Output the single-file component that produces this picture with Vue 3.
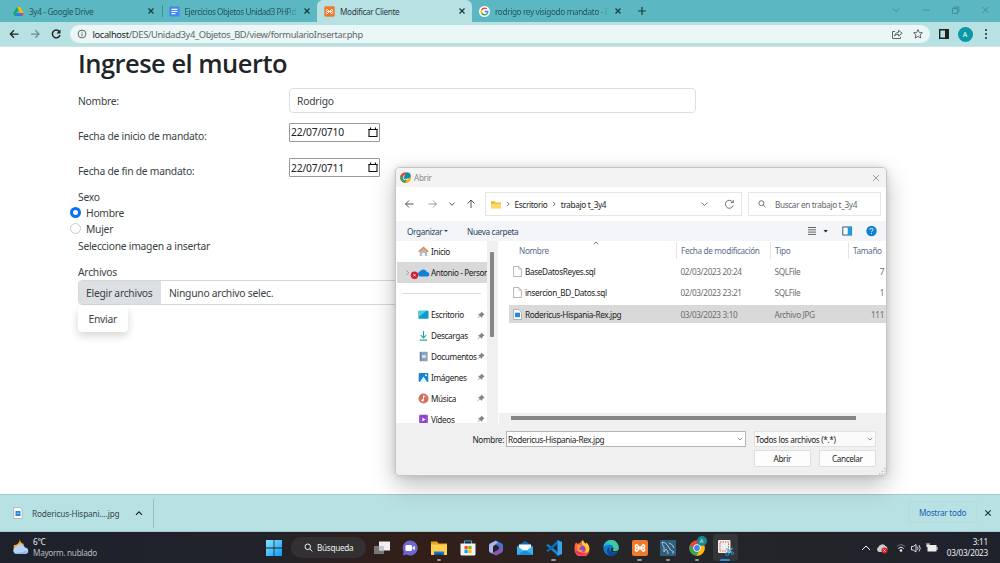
<script setup>
const side = [
  { name: 'Escritorio', icon: 'desk' },
  { name: 'Descargas', icon: 'down' },
  { name: 'Documentos', icon: 'doc' },
  { name: 'Imágenes', icon: 'img' },
  { name: 'Música', icon: 'mus' },
  { name: 'Vídeos', icon: 'vid' },
]
const files = [
  { name: 'BaseDatosReyes.sql', date: '02/03/2023 20:24', type: 'SQLFile', size: '7' },
  { name: 'insercion_BD_Datos.sql', date: '02/03/2023 23:21', type: 'SQLFile', size: '1' },
  { name: 'Rodericus-Hispania-Rex.jpg', date: '03/03/2023 3:10', type: 'Archivo JPG', size: '111', sel: true },
]
</script>

<template>
  <div class="screen">
    <header class="tabs">
      <div class="tab t1">
        <svg class="fav" viewBox="0 0 12 12"><path d="M4.2 1h3.6l4 7H8.2z" fill="#ffba00" /><path d="M4.2 1 .2 8 2 11l4-7z" fill="#11a861" /><path d="M3.8 8h8L10 11H2z" fill="#3777e3" /><path d="M8.2 8h3.6L10 11z" fill="#ea4335" /></svg>
        <span class="label">3y4 - Google Drive</span>
        <svg class="x" viewBox="0 0 8 8"><path d="M1.5 1.5l5 5m0-5l-5 5" /></svg>
      </div>
      <div class="tab t2">
        <svg class="fav" viewBox="0 0 12 12"><rect x=".5" y=".5" width="11" height="11" rx="1.5" fill="#4285f4" /><path d="M2.7 3.7h6.6M2.7 6h6.6M2.7 8.3h4.3" stroke="#fff" stroke-width="1.2" /></svg>
        <span class="label fade">Ejercicios Objetos Unidad3 PHP.d</span>
        <svg class="x" viewBox="0 0 8 8"><path d="M1.5 1.5l5 5m0-5l-5 5" /></svg>
      </div>
      <div class="tab t3">
        <svg class="fav" viewBox="0 0 12 12"><rect x=".3" y=".3" width="11.4" height="11.4" rx="1.5" fill="#ee7a2f" /><path d="M3.500 3.500l5 5M8.500 3.500l-5 5M3.500 3.500q-2 1.300 0 2.500h5q2-1.200 0-2.500M3.500 8.500q-2-1.300 0-2.500h5q2 1.200 0 2.500" fill="none" stroke="#fff" stroke-width="1" /></svg>
        <span class="label">Modificar Cliente</span>
        <svg class="x" viewBox="0 0 8 8"><path d="M1.5 1.5l5 5m0-5l-5 5" /></svg>
      </div>
      <div class="tab t4">
        <svg class="fav" viewBox="0 0 12 12"><circle cx="6" cy="6" r="6" fill="#fff" /><g fill="none" stroke-width="1.6"><path d="M8.5 3.3A3.6 3.6 0 0 0 2.9 4.2" stroke="#ea4335" /><path d="M2.9 4.2a3.6 3.6 0 0 0 0 3.6" stroke="#fbbc05" /><path d="M2.9 7.8a3.6 3.6 0 0 0 5.5 1" stroke="#34a853" /><path d="M8.4 8.8A3.6 3.6 0 0 0 9.6 6H6.2" stroke="#4285f4" /></g></svg>
        <span class="label fade">rodrigo rey visigodo mandato - B</span>
        <svg class="x" viewBox="0 0 8 8"><path d="M1.5 1.5l5 5m0-5l-5 5" /></svg>
      </div>
      <svg class="plus" viewBox="0 0 8 8"><path d="M4 0v8M0 4h8" /></svg>
      <svg class="win" viewBox="0 0 100 12"><path d="M3 4.5l3.2 3.2 3.2-3.2M32.700 6h7M62.500 4.500h5v5h-5zM64 4.500V3h5v5h-1.500M92.500 3l6 6m0-6l-6 6" /></svg>
    </header>

    <div class="toolbar">
      <svg class="navi" viewBox="0 0 70 24"><g fill="none" stroke-width="1.250"><path stroke="#222" d="M18.500 12h-8m3.500-3.700L10.300 12l3.700 3.700" /><path stroke="#668f93" d="M31 12h8m-3.700-3.700L39 12l-3.700 3.700" /><path stroke="#222" stroke-width="1.400" d="M59.300 9.500A3.900 3.900 0 1 0 60 13" /></g><path fill="#222" d="M60.500 7.500v4h-4z" /></svg>
      <div class="url">
        <svg class="info" viewBox="0 0 10 10"><circle cx="5" cy="5" r="3.900" /><path d="M5 4.400v2.800M5 2.700v1" /></svg>
        <span class="addr"><b>localhost</b>/DES/Unidad3y4_Objetos_BD/view/formularioInsertar.php</span>
        <svg class="share" viewBox="0 0 12 12"><path d="M4 3.500H1.500v7h8V8.800M3.500 8q.5-3.500 4-3.700V2.300L11.200 5.300 7.500 8V6.300Q5 6.200 3.500 8z" /></svg>
        <svg class="star" viewBox="0 0 12 12"><path d="M6 1.600l1.300 2.900 3.100.3-2.300 2.100.7 3.100L6 8.400 3.200 10l.7-3.100-2.300-2.100 3.100-.3z" /></svg>
      </div>
      <svg class="panel" viewBox="0 0 10 10"><path d="M0 0h10v10H0z M1.400 1.400v7.200h4.600V1.400z" fill-rule="evenodd" /></svg>
      <span class="avatar">A</span>
      <svg class="dots" viewBox="0 0 4 12"><circle cx="2" cy="2" r="1" /><circle cx="2" cy="6" r="1" /><circle cx="2" cy="10" r="1" /></svg>
    </div>

    <main class="page">
      <h1>Ingrese el muerto</h1>
      <div class="field f1"><label>Nombre:</label><div class="control">Rodrigo</div></div>
      <div class="field f2"><label>Fecha de inicio de mandato:</label><div class="date">22/07/0710<svg viewBox="0 0 10 11"><path d="M1 2.500h8v7H1z" /><path d="M.5 2.500h9M2.500.5v2M7.500.5v2" stroke-width="1.500" /></svg></div></div>
      <div class="field f3"><label>Fecha de fin de mandato:</label><div class="date">22/07/0711<svg viewBox="0 0 10 11"><path d="M1 2.500h8v7H1z" /><path d="M.5 2.500h9M2.500.5v2M7.500.5v2" stroke-width="1.500" /></svg></div></div>
      <p class="sexo">Sexo</p>
      <div class="radio"><i class="on"></i>Hombre</div>
      <div class="radio"><i></i>Mujer</div>
      <p class="selec">Seleccione imagen a insertar</p>
      <p class="arch">Archivos</p>
      <div class="file"><span class="choose">Elegir archivos</span><span class="none">Ninguno archivo selec.</span></div>
      <button class="send">Enviar</button>
    </main>

    <div class="downloads">
      <svg class="dfile" viewBox="0 0 10 12"><path d="M.8.500h6L9.200 3v8.500H.8z" fill="#fff" stroke="#999" stroke-width=".6" /><rect x="2.500" y="4" width="5" height="5" fill="#2785dc" /><path d="M3.500 6.800l1.500-1.600 1.500 1.600z" fill="#a8dcff" /></svg>
      <span class="dname">Rodericus-Hispani....jpg</span>
      <svg class="chev" viewBox="0 0 8 6"><path d="M1 4.800l3-3 3 3" /></svg>
      <i class="sep"></i>
      <span class="show">Mostrar todo</span>
      <svg class="dx" viewBox="0 0 8 8"><path d="M1.300 1.300l5.400 5.400m0-5.400l-5.400 5.400" /></svg>
    </div>

    <footer class="task">
      <svg class="weather" viewBox="0 0 18 18"><path d="M8 1q-.2 4 4 5l-3 5-7-1Q1 8 2 7q5 0 6-6z" fill="#f5a623" /><path d="M4.500 16a3.800 3.800 0 0 1 0-7.500 4.700 4.700 0 0 1 8.500 1 3.300 3.300 0 0 1 .7 6.500z" fill="#b8d2fa" /><path d="M2 14.500q7 1 13-2-.2 3-2.500 3.500h-8q-1.500 0-2.500-1.500z" fill="#8eb3ed" /></svg>
      <div class="wtext">6°C<br><span>Mayorm. nublado</span></div>
      <svg class="start" viewBox="0 0 16 16"><defs><linearGradient id="wg" x2="1" y2="1"><stop stop-color="#8be3ff" /><stop offset="1" stop-color="#0a9af5" /></linearGradient></defs><path fill="url(#wg)" d="M0 0h7.600v7.600H0zM8.400 0H16v7.600H8.400zM0 8.400h7.600V16H0zM8.400 8.400H16V16H8.400z" /></svg>
      <div class="search"><svg viewBox="0 0 10 10"><circle cx="4.200" cy="4.200" r="3.100" /><path d="M6.500 6.500L9.300 9.300" /></svg>Búsqueda</div>
      <div class="apps">
        <div><svg viewBox="0 0 16 16"><path d="M0 6h10v8H0z" fill="#777" /><path d="M5 1.500h11v9H5z" fill="#eee" /><path d="M5 6h5v4.500H5z" fill="#c5c5c5" /></svg></div>
        <div><svg viewBox="0 0 16 16"><path d="M8 .5a7.500 7.500 0 1 1-3.500 14L1 15.500l.700-3.700A7.500 7.500 0 0 1 8 .5z" fill="#6e66cc" /><rect x="3.500" y="5" width="6.500" height="6" rx="1.200" fill="#fff" /><path d="M10.500 7.500l2.300-1.700v4.500l-2.300-1.700z" fill="#fff" /></svg></div>
        <div class="run"><svg viewBox="0 0 16 16"><path d="M0 1.500h6l1.500 2H16V15H0z" fill="#e9a518" /><path d="M0 4.500h16V15H0z" fill="#ffd04f" /><path d="M3 15v-3.500h10V15z" fill="#1679c9" /><path d="M4.500 15v-1.500h7V15z" fill="#0b4f94" /></svg></div>
        <div><svg viewBox="0 0 16 16"><path d="M4.500 4V1h7v3" fill="none" stroke="#2ea8df" stroke-width="1.200" /><path d="M.5 3.500h15V14q0 1.500-1.500 1.500H2Q.5 15.500.5 14z" fill="#f3f3f3" /><path d="M4.500 6H7.700v3.200H4.500z" fill="#f25022" /><path d="M8.300 6h3.200v3.200H8.300z" fill="#7fba00" /><path d="M4.500 9.800h3.200V13H4.500z" fill="#00a4ef" /><path d="M8.300 9.800h3.200V13H8.300z" fill="#ffb900" /></svg></div>
        <div><svg viewBox="0 0 16 16"><path d="M8 .5L2 3.500Q1 4 1 5.500v5Q1 12 2.300 12.700L5 14V7q0-1 1-1.500L10.500 3z" fill="#a8b5ee" /><path d="M8 .5l6 3q1 .5 1 2v4L11 7 9.500 5.500 7 4.500l3-1.700z" fill="#3f77d2" /><path d="M15 9v1.500q0 1.500-1.300 2.200L8 15.500l-5.500-2.700Q5 13 7 11.500l3.500-2L11 7z" fill="#8759be" /></svg></div>
        <div><svg viewBox="0 0 16 16"><path d="M0 6l8-5 8 5v9H0z" fill="#1268ad" /><path d="M2 4.500h12V11H2z" fill="#fff" /><path d="M0 6l8 5.500L16 6v9H0z" fill="#36b5ee" /><path d="M0 15l8-5 8 5z" fill="#1b8ed8" /></svg></div>
        <div class="run"><svg viewBox="0 0 16 16"><path d="M.5 4.700L2 4l10 8v4L.5 5.500z" fill="#1484d2" /><path d="M.5 11.300L2 12 12 4V0L.5 10.500z" fill="#0a6ab4" /><path d="M11.500 0L16 2v12l-4.500 2z" fill="#35a3ee" /></svg></div>
        <div><svg viewBox="0 0 16 16"><path d="M2 2l1.500 2Q5 3 6 3q1-2 3-3 0 2.500 3 4l.5-1.500Q16 6 15.500 10a7.500 7.500 0 0 1-15-1Q.3 5 2 2z" fill="#ff6332" /><path d="M9 0q0 2.500 3 4l.5-1.500Q16 6 15 10q-1 3-4 3Q14 7 8 5 7 2 9 0z" fill="#ffcc35" /><path d="M1 10q1 5 7 5.700Q13 15 14.500 12 10 15 6 12z" fill="#e7317b" /><circle cx="7.800" cy="8.800" r="3.200" fill="#8a49d9" /><path d="M3 5q3-.7 4.500 1.500L5 8q1 2.700 4.500 2.500Q6 14 3.500 10.500z" fill="#ff9838" /></svg></div>
        <div><svg viewBox="0 0 16 16"><circle cx="8" cy="8" r="7.700" fill="#127ac8" /><path d="M.3 7A7.700 7.700 0 0 1 15.700 8q-.5 3.500-4.200 3.300-2.500-.5-1-2.500Q10 4.500 5.500 4.800 2 5 .3 7z" fill="#2fb5dc" /><path d="M8 .3A7.700 7.700 0 0 1 15.700 8q-.5 3.500-4.200 3.300-2.500-.5-1-2.500Q11 4 3 2.500 5 .5 8 .3z" fill="#4ad083" opacity=".7" /><path d="M6.500 7q-1.500 6 7.500 6-6 5.500-9.500.5Q2.500 9 6.500 7z" fill="#0b4b91" /><path d="M10.500 8.800q-1.500 2 1 2.500 2.500.3 4-1L14.300 12.500Q7 13 8 9q.7-1.500 2-1.500z" fill="#25272d" /></svg></div>
        <div class="run"><svg viewBox="0 0 16 16"><rect width="16" height="16" rx="2" fill="#f1792c" /><path d="M4.500 4.500l7 7m0-7l-7 7M4.500 4.500q-2.500 1.700 0 3.500h7q2.500-1.800 0-3.500M4.500 11.500q-2.500-1.700 0-3.500h7q2.500 1.800 0 3.500" fill="none" stroke="#fff" stroke-width="1.500" /></svg></div>
        <div class="run"><svg viewBox="0 0 16 16"><rect width="16" height="16" rx="1" fill="#2e5f7e" /><path d="M2 2q4 0 6 4 2 5 6 6l-2 1.500M2 2q0 3 2 5v5l2-3q2 1 2 5M9 3q4 1 5 5" fill="none" stroke="#b9cfda" stroke-width=".9" /></svg></div>
        <div class="run"><svg class="chrome" viewBox="0 0 16 16"><circle cx="8" cy="8" r="7.700" fill="#ea4335" /><path d="M1.300 4.200A7.700 7.700 0 0 0 7.500 15.700L11 9.700 4.700 9.700z" fill="#34a853" /><path d="M8 4.500h6.900A7.700 7.700 0 0 1 7.500 15.700L11 9.800z" fill="#fbbc05" /><circle cx="8" cy="8" r="3.700" fill="#fff" /><circle cx="8" cy="8" r="2.900" fill="#4285f4" /></svg><span class="badge">A</span></div>
        <div class="run active"><svg viewBox="0 0 16 16"><rect x="0" y="0" width="12.500" height="13" rx="1" fill="#eee" /><rect x="2" y="2" width="8.500" height="9" fill="none" stroke="#d65b4a" stroke-dasharray="1.500 1" /><path d="M8 8.500l6 4M14.500 8L10 12.500" stroke="#4fb3e7" stroke-width="1.200" /><circle cx="9.300" cy="14" r="1.500" fill="none" stroke="#2698da" /><circle cx="14.200" cy="13.200" r="1.300" fill="none" stroke="#2698da" /></svg></div>
      </div>
      <svg class="tray" viewBox="0 0 80 16"><g fill="none" stroke="#eee"><path d="M2 10l4-4 4 4" /><path d="M37 6.500a5.500 5.500 0 0 1 8 0" stroke="#777" /><path d="M38.300 8.500a3.800 3.800 0 0 1 5.400 0" /><path d="M51.500 6.500v3.500h1.800L56 12V4.500L53.300 6.500zM57.500 6.700q1 1.700 0 3.200M59 5.200q2.500 3.300 0 6.200" stroke-width=".9" /></g><circle cx="41" cy="10.500" r="1.300" fill="#eee" /><path d="M19 12a2.700 2.700 0 0 1-.5-5 4 4 0 0 1 7-1q2 .5 2 3L25 12z" fill="#ccc" /><circle cx="24.500" cy="10.500" r="3" fill="#d8202c" /><path d="M23.400 9.400l2.200 2.200m0-2.200l-2.200 2.200" stroke="#fff" stroke-width=".7" /><path d="M67.500 5h9v6.500h-9z" fill="#eee" /><path d="M76.500 7h1v3h-1zM66.500 3h1v1.500h1V3h1v4h-3z" fill="#eee" /></svg>
      <div class="clock">3:11<br>03/03/2023</div>
    </footer>

    <section class="dialog">
      <div class="dtitle">
        <svg class="clogo" viewBox="0 0 16 16"><circle cx="8" cy="8" r="7.700" fill="#ea4335" /><path d="M1.300 4.200A7.700 7.700 0 0 0 7.500 15.700L11 9.700 4.700 9.700z" fill="#34a853" /><path d="M8 4.500h6.900A7.700 7.700 0 0 1 7.500 15.700L11 9.800z" fill="#fbbc05" /><circle cx="8" cy="8" r="3.700" fill="#fff" /><circle cx="8" cy="8" r="2.900" fill="#4285f4" /><circle cx="11.200" cy="5" r="4.200" fill="#0d8fa6" /></svg>
        <span>Abrir</span>
        <svg class="close" viewBox="0 0 8 8"><path d="M1 1l6 6m0-6L1 7" /></svg>
      </div>
      <div class="dnav">
        <svg class="arrows" viewBox="0 0 76 14"><g fill="none" stroke="#555"><path d="M9.500 7H1.500M5 3.500L1.500 7 5 10.500" /><path stroke="#999" d="M24.500 7h8M29 3.500L32.500 7 29 10.500" /><path d="M45.500 5.700l2.500 2.600 2.500-2.600M67 11V3M63.500 6.500L67 3l3.500 3.500" /></g></svg>
        <div class="path">
          <svg class="fold" viewBox="0 0 12 10"><path d="M0 1h4l1.200 1.500H12V9.500H0z" fill="#f0b430" /><path d="M0 4h12v5.500H0z" fill="#ffd767" /></svg>
          <svg class="gt" viewBox="0 0 4 6"><path d="M1 .8L3.200 3 1 5.200" /></svg>
          <span class="p1">Escritorio</span>
          <svg class="gt" viewBox="0 0 4 6"><path d="M1 .8L3.200 3 1 5.200" /></svg>
          <span class="p2">trabajo t_3y4</span>
          <svg class="pend" viewBox="0 0 40 14"><path d="M3.500 5.700L6.500 8.500l3-2.800M34.800 5.200A4 4 0 1 0 35.200 8.500M35.300 3v2.600h-2.600" /></svg>
        </div>
        <div class="find"><svg viewBox="0 0 8 8"><circle cx="3.400" cy="3.200" r="2.500" /><path d="M5.200 5L7.400 7.200" /></svg>Buscar en trabajo t_3y4</div>
      </div>
      <div class="dcmd">
        <span class="org">Organizar</span><i class="tri"></i><span class="nueva">Nueva carpeta</span>
        <svg class="cicons" viewBox="0 0 72 12"><path d="M1 2.500h8M1 4.800h8M1 7.100h8M1 9.400h8" stroke="#555" stroke-width=".9" /><path d="M16.500 5h4.400l-2.200 2.500z" fill="#223" /><rect x="35.800" y="2" width="8.800" height="8" fill="#fff" stroke="#234b70" stroke-width=".9" /><path d="M40.700 2h4v8h-4z" fill="#1b9be8" /><circle cx="64.500" cy="6" r="5.200" fill="#0f7fd3" /><path d="M62.900 4.900q0-1.600 1.600-1.600t1.600 1.400q0 .8-1 1.400-.6.400-.6 1M64.500 8v1" fill="none" stroke="#fff" stroke-width=".9" /></svg>
      </div>
      <div class="dbody">
        <nav class="side">
          <div class="srow"><svg class="sico" viewBox="0 0 12 12"><path d="M2 5.500L6 2l4 3.500V11H7.500V7.500h-3V11H2z" fill="#b5bac0" /><path d="M.8 6.300L6 1.500l5.200 4.800" fill="none" stroke="#ed7d31" stroke-width="1.400" /></svg><span>Inicio</span></div>
          <div class="srow cur"><svg class="cloud" viewBox="0 0 26 12"><path d="M2.500 3.500L4.700 5.700 2.500 8" fill="none" stroke="#888" stroke-width=".8" /><path d="M16 9.500a2.700 2.700 0 0 1 0-5.200 4 4 0 0 1 7 .7 2.300 2.300 0 0 1 .7 4.500z" fill="#1081d8" /><circle cx="10.500" cy="8.200" r="3.700" fill="#d51c2c" /><path d="M9.200 6.900l2.600 2.600m0-2.600l-2.600 2.600" stroke="#fff" stroke-width=".8" /></svg><span>Antonio - Person</span></div>
          <div class="srow div"><i></i></div>
          <div v-for="s in side" :key="s.name" class="srow">
            <svg v-if="s.icon === 'desk'" class="sico" viewBox="0 0 12 12"><rect x=".5" y="2" width="11" height="8.500" rx=".8" fill="#129bc8" /><path d="M.5 2.800Q.5 2 1.300 2H9L.5 9z" fill="#4ed0dc" /></svg>
            <svg v-else-if="s.icon === 'down'" class="sico" viewBox="0 0 12 12"><path d="M6 1v7.500M3 5.700l3 3 3-3M2 11h8" fill="none" stroke="#2ba88c" stroke-width="1.200" /></svg>
            <svg v-else-if="s.icon === 'doc'" class="sico" viewBox="0 0 12 12"><rect x="2" y=".8" width="8.500" height="10.500" rx=".8" fill="#8aa2c0" /><path d="M4.500 4.500h4v3h-4z" fill="#dbe5f0" /><path d="M2 1h1.500v10H2z" fill="#6480a5" /></svg>
            <svg v-else-if="s.icon === 'img'" class="sico" viewBox="0 0 12 12"><rect x=".8" y="1.200" width="10.400" height="9.600" rx=".8" fill="#1683d5" /><path d="M2 10.800L6 5l4 5.800z" fill="#e2f4ff" /><circle cx="8.700" cy="3.500" r="1" fill="#fff" /></svg>
            <svg v-else-if="s.icon === 'mus'" class="sico" viewBox="0 0 12 12"><circle cx="6" cy="6" r="5.500" fill="#d9705f" /><path d="M6 8V3l2 1" fill="none" stroke="#fff" stroke-width="1" /><circle cx="5" cy="8" r="1.300" fill="#fff" /></svg>
            <svg v-else class="sico" viewBox="0 0 12 12"><rect x="1.200" y=".8" width="9.600" height="10.400" rx=".8" fill="#8e3fd2" /><path d="M4.700 3.700v4.600L8.300 6z" fill="#fff" /><path d="M2.300 1v10M9.700 1v10" stroke="#c99bee" stroke-width=".9" stroke-dasharray="1 1" /></svg>
            <span>{{ s.name }}</span>
            <svg class="pin" viewBox="0 0 8 8"><path d="M4.500.500L7.500 3.500 6.500 4 5.200 5.500 5 7 3 5.300.8 7.200.5 7 2.600 4.700 1 3l1.700-.2L4.200 1.500z" fill="#7a8793" /></svg>
          </div>
        </nav>
        <div class="gutter"><i></i></div>
        <div class="list">
          <div class="lrow lhead"><span class="c1">Nombre</span><span class="c2">Fecha de modificación</span><span class="c3">Tipo</span><span class="c4">Tamaño</span><svg class="sort" viewBox="0 0 6 4"><path d="M.7 3.200L3 1l2.300 2.200" /></svg></div>
          <div v-for="f in files" :key="f.name" class="lrow" :class="{ sel: f.sel }">
            <span class="c1"><svg class="fico" viewBox="0 0 9 11"><path d="M.6.500h5.200l2.600 2.600v7.400H.6z" fill="#fff" stroke="#999" stroke-width=".7" /><path v-if="!f.sel" d="M5.800.500v2.600h2.600" fill="none" stroke="#999" stroke-width=".6" /><rect v-if="f.sel" x="2" y="3.700" width="5" height="4.500" fill="#2785dc" /></svg>{{ f.name }}</span>
            <span class="c2">{{ f.date }}</span><span class="c3">{{ f.type }}</span><span class="c4">{{ f.size }}</span>
          </div>
          <div class="hbar"><i></i></div>
        </div>
      </div>
      <div class="dfoot">
        <div class="l1"><span class="nl">Nombre:</span><div class="combo">Rodericus-Hispania-Rex.jpg<svg viewBox="0 0 6 4"><path d="M.7.800L3 3 5.300.800" /></svg></div><div class="filter">Todos los archivos (*.*)<svg viewBox="0 0 6 4"><path d="M.7.800L3 3 5.300.800" /></svg></div></div>
        <div class="l2"><button>Abrir</button><button>Cancelar</button></div>
        <svg class="grip" viewBox="0 0 8 8"><path d="M6 0h1.500v1.500H6zM6 3h1.500v1.500H6zM3 3h1.500v1.500H3zM6 6h1.500v1.500H6zM3 6h1.500v1.500H3zM0 6h1.500v1.500H0z" fill="#bbb" /></svg>
      </div>
    </section>
  </div>
</template>

<style>
html, body { margin: 0; overflow: hidden; }
</style>

<style scoped>
* { box-sizing: border-box; }
svg { flex: none; display: block; }
.screen { position: relative; width: 1000px; height: 563px; overflow: hidden; display: flex; flex-direction: column; background: #fff; font-family: "Noto Sans", "Open Sans", sans-serif; font-size: 8.200px; letter-spacing: -.34px; color: #222; white-space: nowrap; }
button { font: inherit; padding: 0; color: inherit; letter-spacing: inherit; }

.tabs { height: 22px; flex: none; background: #5bb7c1; display: flex; align-items: center; position: relative; }
.tab { height: 22px; display: flex; align-items: center; color: #25575d; letter-spacing: -.46px; }
.t1 { width: 161.500px; padding: 0 7px 0 13px; border-right: 0; position: relative; letter-spacing: -.34px; }
.t1::after { content: ""; width: 1px; height: 12px; background: #3f8f98; margin-left: 7px; margin-right: -8px; }
.t2 { width: 155.500px; padding: 0 6px 0 7px; }
.t3 { width: 155px; padding: 0 6px 0 7px; background: #b8e1e4; border-radius: 6px 6px 0 0; color: #2c3e40; letter-spacing: -.34px; }
.t4 { width: 156px; padding: 0 6px 0 7px; letter-spacing: -.36px; }
.fav { width: 11px; height: 11px; margin-right: 5px; }
.label { flex: 1; overflow: hidden; }
.fade { -webkit-mask-image: linear-gradient(90deg, #000 90%, transparent); mask-image: linear-gradient(90deg, #000 90%, transparent); }
.x { width: 8px; height: 8px; margin-left: 5px; }
.x path, .dx path { stroke: #1c3a3d; stroke-width: 1.200; }
.plus { width: 8px; height: 8px; margin-left: 10px; }
.plus path { stroke: #1c3a3d; stroke-width: 1.200; }
.win { width: 100px; height: 12px; margin-left: auto; margin-right: 10.500px; position: relative; top: -1px; }
.win path { fill: none; stroke: #3d8c95; stroke-width: .9; }

.toolbar { height: 25px; flex: none; background: #b8e1e4; display: flex; align-items: center; border-bottom: 1px solid #d3e3e4; }
.navi { width: 70px; height: 24px; }
.url { width: 860px; height: 18px; border-radius: 9px; background: #ebf7f7; display: flex; align-items: center; padding: 0 6px 0 7px; }
.info { width: 10px; height: 10px; margin-right: 5.500px; }
.info circle, .info path { fill: none; stroke: #555; stroke-width: .9; }
.addr { font-size: 9.300px; color: #5d6668; flex: 1; }
.addr b { font-weight: 400; color: #222; }
.share, .star { width: 12px; height: 12px; margin-left: 9px; }
.share path, .star path { fill: none; stroke: #555; stroke-width: .9; }
.panel { width: 10px; height: 10px; margin-left: 9px; fill: #222; }
.avatar { width: 15px; height: 15px; border-radius: 50%; background: #0b99a6; color: #fff; font-size: 7px; display: grid; place-items: center; margin-left: 8.500px; letter-spacing: 0; }
.dots { width: 4px; height: 12px; margin-left: 11.500px; fill: #222; }

.page { flex: 1; min-height: 0; padding-left: 78px; color: #3a3f44; font-size: 10.300px; letter-spacing: -.25px; }
h1 { margin: 0; height: 41px; font-family: "Open Sans", "Noto Sans", sans-serif; font-size: 25.500px; line-height: 33px; font-weight: 600; color: #212529; letter-spacing: -.52px; }
.field { display: flex; }
.field label { width: 211px; }
.f1 { height: 35px; }
.f1 label { line-height: 26px; }
.control { width: 406.500px; height: 25px; border: 1px solid #dcdfe2; border-radius: 4px; padding-left: 7px; line-height: 24px; }
.f2, .f3 { height: 35.300px; }
.f2 label, .f3 label { line-height: 27px; }
.date { width: 91px; height: 18.500px; border: 1px solid #999; border-radius: 1px; padding: 0 1px 0 1px; display: flex; align-items: center; justify-content: space-between; color: #222; letter-spacing: -.18px; }
.date svg { width: 10px; height: 11px; }
.date path { fill: none; stroke: #111; stroke-width: 1.100; }
p { margin: 0; }
.sexo { line-height: 16px; margin-top: -5px; }
.radio { display: flex; align-items: center; height: 16.500px; margin-left: -8px; }
.radio i { width: 11px; height: 11px; border: 1px solid #ccc; border-radius: 50%; margin-right: 5px; position: relative; top: -.5px; }
.radio i.on { border: 3px solid #0d6efd; }
.selec { line-height: 17px; margin-top: .5px; }
.arch { line-height: 16px; margin-top: 9px; }
.file { width: 617px; height: 25px; border: 1px solid #d3d8dc; border-radius: 4px; display: flex; line-height: 24px; margin-top: -.5px; }
.choose { width: 82px; background: #dde0e3; padding-left: 7px; }
.none { padding-left: 8px; }
.send { display: block; width: 49.500px; height: 26px; margin-top: 1px; border: 0; border-radius: 4px; background: #fff; box-shadow: 0 4px 9px rgba(0, 0, 0, .16); }

.downloads { height: 38px; flex: none; background: #b8e1e4; border-top: 1px solid #a9c8ca; display: flex; align-items: center; padding-left: 13px; color: #33484a; font-size: 8.200px; border-bottom: 1px solid #9fc9cc; letter-spacing: -.13px; }
.dfile { width: 10px; height: 12px; margin-right: 9px; }
.dname { width: 102px; }
.chev { width: 8px; height: 6px; margin-left: 1px; }
.chev path { fill: none; stroke: #222; stroke-width: 1.200; }
.sep { width: 1px; height: 29px; background: #94bfc2; margin-left: 10px; }
.show { margin-left: auto; width: 69px; height: 22px; border: 1px solid #b4dade; border-radius: 2px; display: grid; place-items: center; color: #1b5fb4; position: relative; top: -1px; letter-spacing: -.27px; }
.dx { width: 8px; height: 8px; margin-left: 7px; margin-right: 8px; }

.task { height: 31px; flex: none; display: flex; align-items: center; background: linear-gradient(90deg, #1c212b 0, #22232a 27%, #2d201e 35%, #331e18 42%, #2c211f 52%, #25262a 64%, #222429 80%, #1e222b 100%); color: #eee; padding-left: 12px; letter-spacing: -.3px; }
.weather { width: 18px; height: 18px; position: relative; top: -1px; }
.wtext { margin-left: 3px; width: 233px; line-height: 10.500px; }
.wtext span { color: #bbb; }
.start { width: 16px; height: 16px; }
.search { width: 75px; height: 21px; border-radius: 11px; background: #333033; margin-left: 9px; display: flex; align-items: center; padding-left: 13px; }
.search svg { width: 9px; height: 9px; margin-right: 4px; }
.search svg * { fill: none; stroke: #eee; stroke-width: 1.100; }
.apps { display: flex; margin-left: 1.500px; }
.apps div { width: 28.650px; height: 31px; display: grid; place-items: center; position: relative; }
.apps svg { width: 16px; height: 16px; }
.run::after { content: ""; position: absolute; bottom: 2.500px; left: 12px; width: 4.500px; height: 2px; border-radius: 1px; background: #999; }
.apps .active::before { content: ""; position: absolute; inset: 2px 1.500px; border-radius: 3px; background: #343539; }
.active svg { position: relative; }
.active::after { left: 9px; width: 10px; background: #1e90f0; bottom: 2.500px; }
.badge { position: absolute; left: 14px; top: 4px; width: 10px; height: 10px; border-radius: 50%; background: #168a92; font-size: 5.500px; display: grid; place-items: center; letter-spacing: 0; }
.tray { width: 80px; height: 16px; margin-left: auto; }
.clock { width: 46px; margin-left: 2px; margin-right: 12px; text-align: right; line-height: 10.500px; letter-spacing: -.23px; }

.dialog { position: absolute; left: 395px; top: 167px; width: 492px; height: 309px; border: 1px solid #c4c4c4; border-radius: 5px; background: #fff; overflow: hidden; box-shadow: 0 9px 24px rgba(0, 0, 0, .26), 0 0 6px rgba(0, 0, 0, .12); display: flex; flex-direction: column; }
.dtitle { height: 19px; flex: none; background: #f3f3f3; display: flex; align-items: center; padding: 0 6.500px 0 4px; color: #888; }
.clogo { width: 11px; height: 11px; margin-right: 3px; }
.close { width: 8px; height: 8px; margin-left: auto; }
.close path { stroke: #888; stroke-width: .8; }
.dnav { height: 34px; flex: none; display: flex; align-items: center; }
.arrows { width: 76px; height: 14px; margin-left: 8px; margin-right: 5px; }
.path { width: 257px; height: 24px; border: 1px solid #e6e6e6; display: flex; align-items: center; padding-left: 5px; }
.fold { width: 10px; height: 9px; }
.gt { width: 4px; height: 6px; margin: 0 4.500px 0 5px; }
.gt path, .pend path, .find svg *, .sort path { fill: none; stroke: #666; stroke-width: .9; }
.pend { width: 40px; height: 14px; margin-left: auto; margin-right: 3px; }
.find { width: 133px; height: 24px; margin-left: 6px; border: 1px solid #e6e6e6; display: flex; align-items: center; color: #666; padding-left: 9px; }
.find svg { width: 8px; height: 8px; margin-right: 9px; }
.dcmd { height: 20px; flex: none; background: #f4f5f8; display: flex; align-items: center; color: #294462; padding-left: 11px; }
.org { width: 34.500px; }
.tri { border: 2px solid transparent; border-top: 2.500px solid #294462; border-bottom: 0; margin-left: 2px; }
.nueva { margin-left: 19.500px; }
.cicons { width: 72px; height: 12px; margin-left: auto; margin-right: 7px; }
.dbody { height: 182px; flex: none; display: flex; }
.side { width: 91px; overflow: hidden; padding-top: .5px; }
.srow { height: 20.900px; display: flex; align-items: center; padding-left: 22px; overflow: hidden; }
.srow span { flex: 1; }
.sico { width: 11px; height: 11px; margin-right: 2px; }
.srow.cur { background: #d9d9d9; padding-left: 7px; margin-left: 1px; letter-spacing: -.4px; }
.cloud { width: 26px; height: 12px; margin-right: 1px; }
.srow.div { padding-left: 6px; }
.div i { width: 79px; height: 1px; background: #ddd; }
.pin { width: 8px; height: 8px; margin-right: 2px; }
.gutter { width: 11px; background: #f0f0f0; padding: 10.500px 0 0 3px; }
.gutter i { display: block; width: 4px; height: 85px; background: #858585; border-radius: 1px; }
.list { flex: 1; display: flex; flex-direction: column; }
.lrow { height: 18px; margin: 1.600px 0 1.600px 11px; display: flex; align-items: center; color: #6d6d6d; position: relative; }
.lrow .c1 { width: 171.500px; display: flex; align-items: center; color: #222; padding-left: 3.500px; }
.fico { width: 9px; height: 11px; margin-right: 3.500px; }
.c2 { width: 94px; }
.c3 { width: 78px; }
.c4 { flex: 1; text-align: right; padding-right: 2px; }
.lrow.sel { background: #d9d9d9; }
.lhead { height: 18px; margin-top: 0; margin-bottom: 2.200px; color: #5b6e8c; }
.lhead .c1 { color: #5b6e8c; padding-left: 10px; width: 167px; }
.lhead .c2, .lhead .c3, .lhead .c4 { border-left: 1px solid #e5e5e5; height: 17px; line-height: 17px; padding-left: 4px; text-align: left; padding-right: 0; }
.sort { position: absolute; left: 84px; top: 0; width: 6px; height: 4px; }
.hbar { margin-top: auto; margin-left: 1px; height: 10px; background: #f0f0f0; padding: 3px 0 0 12px; }
.hbar i { display: block; width: 345px; height: 3.500px; background: #858585; }
.dfoot { flex: 1; background: #f0f0f0; position: relative; padding-top: 8px; }
.l1, .l2 { display: flex; align-items: center; }
.nl { width: 110px; text-align: right; padding-right: 2px; }
.combo, .filter { height: 16px; background: #fff; border: 1px solid #b5b5b5; display: flex; align-items: center; justify-content: space-between; padding: 0 2px 0 1px; width: 240px; }
.filter { width: 122px; margin-left: 7.500px; border-color: #e2e2e2; background: #fbfbfb; }
.dfoot svg path { stroke: #777; fill: none; stroke-width: .8; }
.combo svg, .filter svg { width: 6px; height: 4px; }
.l2 { padding-left: 358px; margin-top: 3px; gap: 8.500px; }
.l2 button { width: 56.500px; height: 17px; border: 1px solid #dedede; border-radius: 1px; background: #fdfdfd; }
.dfoot .grip { position: absolute; right: 0; bottom: 0; width: 7px; height: 7px; }
.dfoot .grip path { stroke: none; fill: #bbb; }
</style>
